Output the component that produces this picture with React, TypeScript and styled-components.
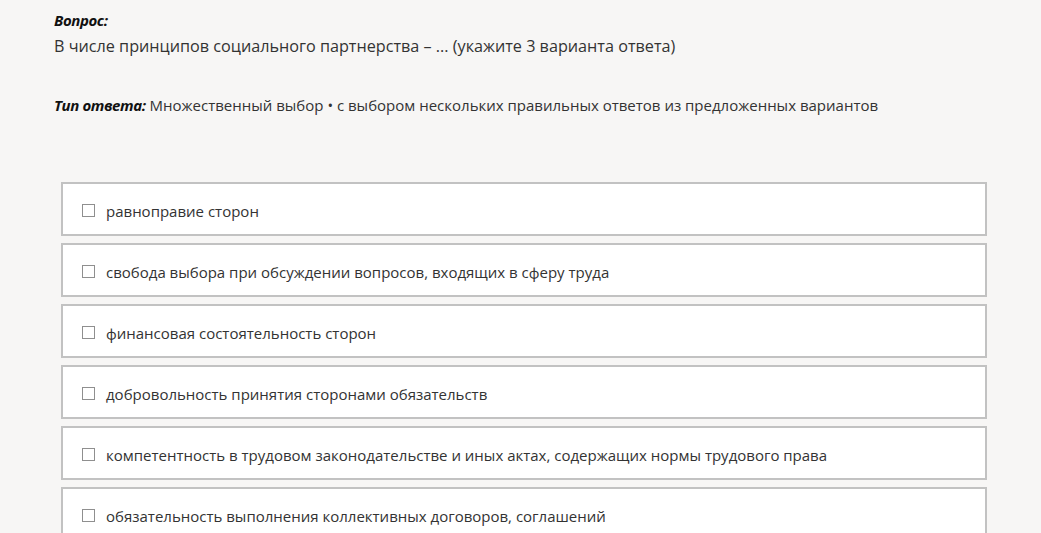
import styled, { createGlobalStyle } from "styled-components";

const GlobalStyle = createGlobalStyle`
  html, body {
    margin: 0;
    padding: 0;
    background: #f7f6f5;
  }
  body {
    font-family: "Open Sans", "Noto Sans", sans-serif;
    color: #333;
  }
`;

const Page = styled.div`
  padding: 10px 54px 0 54px;
  width: 1041px;
  box-sizing: border-box;
`;

const Label = styled.span`
  font-weight: 700;
  font-style: italic;
  color: #111;
  letter-spacing: -0.4px;
`;

const Heading = styled.div`
  font-size: 15px;
  line-height: 20px;
`;

const Question = styled.div`
  margin-top: 2px;
  font-size: 16.2px;
  line-height: 28px;
  color: #333;
`;

const AnswerType = styled.div`
  margin-top: 32px;
  font-size: 15px;
  line-height: 26px;
  color: #333;
`;

const Options = styled.div`
  margin: 64px 0 0 7px;
  width: 926px;
  display: flex;
  flex-direction: column;
  gap: 7px;
`;

const Option = styled.label`
  display: flex;
  align-items: center;
  gap: 11px;
  height: 54px;
  box-sizing: border-box;
  padding: 3px 0 0 19px;
  background: #fff;
  border: 2px solid #c2c2c2;
  font-size: 15px;
  color: #333;
  cursor: pointer;
`;

const Box = styled.span`
  width: 11px;
  height: 11px;
  border: 1px solid #8f8f8f;
  background: #fff;
  flex-shrink: 0;
  margin-top: -1px;
`;

const options = [
  "равноправие сторон",
  "свобода выбора при обсуждении вопросов, входящих в сферу труда",
  "финансовая состоятельность сторон",
  "добровольность принятия сторонами обязательств",
  "компетентность в трудовом законодательстве и иных актах, содержащих нормы трудового права",
  "обязательность выполнения коллективных договоров, соглашений",
];

export default function App() {
  return (
    <>
      <GlobalStyle />
      <Page>
        <Heading>
          <Label>Вопрос:</Label>
        </Heading>
        <Question>
          В числе принципов социального партнерства – ... (укажите 3 варианта ответа)
        </Question>
        <AnswerType>
          <Label>Тип ответа:</Label> Множественный выбор • с выбором нескольких
          правильных ответов из предложенных вариантов
        </AnswerType>
        <Options>
          {options.map((o) => (
            <Option key={o}>
              <Box />
              {o}
            </Option>
          ))}
        </Options>
      </Page>
    </>
  );
}
